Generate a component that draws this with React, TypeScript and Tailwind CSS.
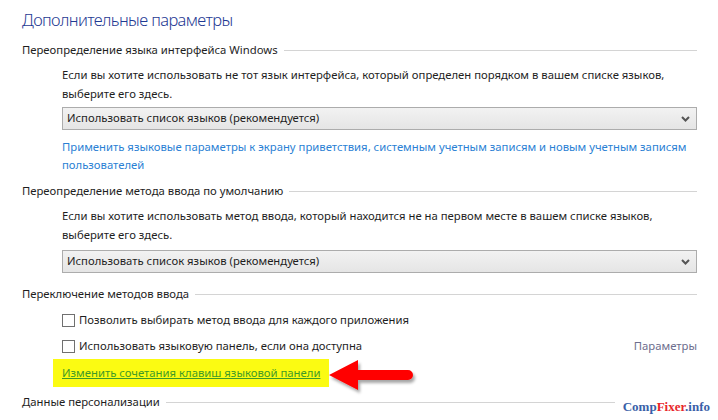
import React from "react";

const font = { fontFamily: '"Noto Sans", "Open Sans", sans-serif' };

function SectionHeader({ title, children }: { title: string; children?: React.ReactNode }) {
  return (
    <div className="flex items-center h-[19px] text-[11.3px] text-[#1e1e1e]">
      <span className="whitespace-nowrap">{title}</span>
      <div className="flex-1 h-px bg-[#d4d4d4] ml-[6px]" />
      {children}
    </div>
  );
}

function Dropdown({ value }: { value: string }) {
  return (
    <div className="ml-[40px] h-[23px] flex items-center justify-between border border-[#acacac] bg-gradient-to-b from-[#f2f2f2] to-[#e5e5e5] pl-[4px] pr-[6px] text-[11.3px] text-[#1e1e1e]">
      <span>{value}</span>
      <svg width="9" height="6" viewBox="0 0 9 6">
        <path d="M1 1 L4.5 4.5 L8 1" fill="none" stroke="#555" strokeWidth="2" />
      </svg>
    </div>
  );
}

function Checkbox({ label }: { label: string }) {
  return (
    <div className="flex items-center h-[19px] text-[11.3px] text-[#1e1e1e]">
      <span className="w-[13px] h-[13px] border border-[#707070] bg-white mr-[4px]" />
      <span className="whitespace-nowrap">{label}</span>
    </div>
  );
}

export default function App() {
  return (
    <div className="w-[718px] h-[420px] bg-white overflow-hidden pl-[22px] pr-[21px] pt-[8px]" style={font}>
      <h1 className="text-[16.5px] leading-[24px] tracking-[-0.6px] text-[#1f3a93] font-light">Дополнительные параметры</h1>

      <div className="mt-[9px]">
        <SectionHeader title="Переопределение языка интерфейса Windows" />
      </div>
      <p className="mt-[5px] ml-[40px] text-[11.3px] leading-[19px] text-[#1e1e1e] whitespace-nowrap">
        Если вы хотите использовать не тот язык интерфейса, который определен порядком в вашем списке языков,
        <br />
        выберите его здесь.
      </p>
      <div className="mt-[4px]">
        <Dropdown value="Использовать список языков (рекомендуется)" />
      </div>
      <p className="mt-[8px] ml-[40px] text-[11.3px] leading-[18px] text-[#2a7fd4] whitespace-nowrap">
        Применить языковые параметры к экрану приветствия, системным учетным записям и новым учетным записям
        <br />
        пользователей
      </p>

      <div className="mt-[8px]">
        <SectionHeader title="Переопределение метода ввода по умолчанию" />
      </div>
      <p className="mt-[5px] ml-[40px] text-[11.3px] leading-[19px] text-[#1e1e1e] whitespace-nowrap">
        Если вы хотите использовать метод ввода, который находится не на первом месте в вашем списке языков,
        <br />
        выберите его здесь.
      </p>
      <div className="mt-[6px]">
        <Dropdown value="Использовать список языков (рекомендуется)" />
      </div>

      <div className="mt-[12px]">
        <SectionHeader title="Переключение методов ввода" />
      </div>
      <div className="mt-[7px] ml-[40px]">
        <Checkbox label="Позволить выбирать метод ввода для каждого приложения" />
      </div>
      <div className="mt-[7px] ml-[40px] flex items-center justify-between">
        <Checkbox label="Использовать языковую панель, если она доступна" />
        <span className="text-[11.3px] text-[#6e6e8e]">Параметры</span>
      </div>
      <div className="mt-[3px] ml-[31px] flex items-start">
        <div className="h-[28px] flex items-center px-[9px] bg-[#fbfb12]">
          <span className="text-[11.3px] text-[#3f9a28] underline whitespace-nowrap">Изменить сочетания клавиш языковой панели</span>
        </div>
        <svg width="92" height="40" viewBox="0 0 92 40" className="-ml-[3px] -mt-[3px] -mb-[12px]">
          <defs>
            <filter id="sh" x="-10%" y="-20%" width="130%" height="160%">
              <feDropShadow dx="2" dy="3" stdDeviation="1.5" floodColor="#000" floodOpacity="0.35" />
            </filter>
          </defs>
          <path
            d="M3 19 L32 4 L32 14 L82 14 A5 5 0 0 1 82 24 L32 24 L32 34 Z"
            fill="#ff0000"
            filter="url(#sh)"
          />
        </svg>
      </div>
      <div className="mt-[6px] mr-[-13px]">
        <SectionHeader title="Данные персонализации">
          <span
            className="ml-[8px] text-[13px] font-bold text-[#3a5fa8] whitespace-nowrap translate-y-[4px]"
            style={{ fontFamily: '"Liberation Serif", serif' }}
          >
            Comp<span className="text-[#e8262a]">Fixer</span>.info
          </span>
        </SectionHeader>
      </div>
    </div>
  );
}
